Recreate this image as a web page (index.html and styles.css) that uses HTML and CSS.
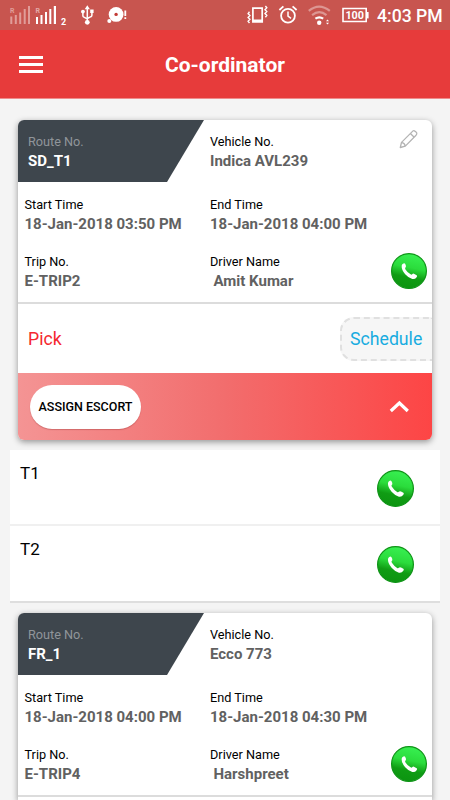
FILE: index.html
```html
<!DOCTYPE html>
<html lang="en">
<head>
<meta charset="utf-8">
<title>Co-ordinator</title>
<link rel="stylesheet" href="styles.css">
</head>
<body>
<svg class="defs" width="0" height="0" aria-hidden="true">
  <defs>
    <linearGradient id="green" x1="0.6" y1="0" x2="0.4" y2="1">
      <stop offset="0" stop-color="#38f052"/>
      <stop offset="0.4" stop-color="#2bdc3c"/>
      <stop offset="0.68" stop-color="#109c14"/>
      <stop offset="1" stop-color="#0c9410"/>
    </linearGradient>
    <symbol id="call" viewBox="0 0 36 36">
      <circle cx="18" cy="18" r="17.4" fill="url(#green)" stroke="#0f9417" stroke-width="1.2"/>
      <path fill="#fff" d="M10.7 12.7C10.8 11.5 12.2 10.3 13.3 10.2Q14.2 10.4 14.8 12.3Q15.3 14.2 14.3 14.7Q13.8 15.2 14.5 16.4Q16.5 19.6 19.6 21.3Q20.6 22 21.2 21.2Q22.1 20.1 23.4 20.9L25.7 22.2Q26.6 23 25.6 24.2Q24 26.6 21.3 26Q17.8 25.2 14.2 21.2Q10.3 16.6 10.7 12.7Z"/>
    </symbol>
  </defs>
</svg>

<div class="status">
  <svg class="status-icons" width="140" height="30" viewBox="0 0 140 30">
    <g fill="#e09d99">
      <path d="M10.3 16.5h2v7.5h-2zM14.8 15h2v9h-2zM19.2 12.5h2v11.5h-2zM23.7 9h2v15h-2zM28 6h2v18h-2z"/>
      <text class="roam" x="10" y="13">R</text>
    </g>
    <g fill="#fff">
      <path d="M36 17h2v7h-2zM40.5 15h2v9h-2zM45 12h2v12h-2zM49.3 9h2v15h-2zM53.8 6h2.2v18h-2.2z"/>
      <text class="roam" x="35.5" y="13" fill="#e3aaa7">R</text>
      <text class="sim" x="61" y="25.2">2</text>
    </g>
    <g fill="none" stroke="#fff" stroke-width="1.5">
      <path d="M87.3 8v14M82.9 12.5v3.2q0 1 1 1.4l3.4 1.8M91.9 12v3.3q0 1-1 1.4l-3.6 1.8"/>
    </g>
    <g fill="#fff">
      <path d="M87.3 5.2l2.6 4h-5.2zM90.2 9.6h3.4v3.4h-3.4z"/>
      <circle cx="82.9" cy="11.6" r="1.9"/>
      <circle cx="87.3" cy="22.3" r="2.4"/>
      <circle cx="116.1" cy="14.4" r="7.4"/>
      <circle cx="109.3" cy="21" r="2"/>
      <path d="M124.4 10.5h1.8v5.6h-1.8zM124.4 17.2h1.8v1.8h-1.8z"/>
    </g>
    <circle cx="116.1" cy="14.4" r="1.7" fill="#c33b36"/>
  </svg>
  <div class="status-right">
    <svg width="126" height="30" viewBox="244 0 126 30">
      <g fill="none" stroke="#fff" stroke-width="1.4">
        <path d="M252.9 8.2h9.3v13.6h-9.3z" stroke-width="1.7"/>
        <path d="M253 20.3h9" stroke-width="1.6"/>
        <path d="M249.5 11.8l-1.4 1.8 1.8 1.9-1.8 1.9 1.8 1.9-1.8 1.9 1.4 1.8M265.4 6l1.4 1.8-1.8 1.9 1.8 1.9-1.8 1.9 1.8 1.9-1.4 1.8"/>
        <circle cx="288" cy="15.8" r="6.9" stroke-width="1.8"/>
        <path d="M288 11.5v4.6l3 2.2" stroke-width="1.5"/>
        <path d="M279.4 10l4-3.6M296.6 10l-4-3.6" stroke-width="1.8"/>
        <path d="M308.8 10.8q10.3-8.5 21 0M312.1 15.1q7.2-5.8 14.4 0" stroke="#dd9692" stroke-width="2.2"/>
        <path d="M315.4 18.7q3.9-2.7 7.8 0" stroke-width="2.1"/>
        <path d="M343 8.5h23.2v13H343z" stroke-width="1.6"/>
      </g>
      <circle cx="319.2" cy="22.8" r="2.2" fill="#fff"/>
      <path d="M326 21.2l1.5-1.8 1.5 1.8zM326 22.8l1.5 1.8 1.5-1.8z" fill="#fff"/>
      <path d="M366.8 12h1.8v6.4h-1.8z" fill="#fff"/>
      <text class="battery" x="345.4" y="19" fill="#fff">100</text>
    </svg>
    <span class="clock">4:03 PM</span>
  </div>
</div>

<header class="appbar">
  <div class="menu"><i></i><i></i><i></i></div>
  <h1>Co-ordinator</h1>
</header>

<main>
  <section class="card">
    <div class="card-head">
      <div class="route"><div class="label">Route No.</div><div class="value">SD_T1</div></div>
      <div class="field"><div class="label">Vehicle No.</div><div class="value">Indica AVL239</div></div>
      <svg class="edit" width="20" height="20" viewBox="0 0 20 20" fill="none" stroke="#b3b3b3" stroke-width="1.3" stroke-linejoin="round">
        <path d="M1.3 18.5l1.2-5.1L13 2.9q1.1-1.6 2.4-1.1 1.5.7 2.4 2.2.3 1.2-1 2.5L6.3 17.1zM2.5 13.4q3 .4 3.8 3.7M11.4 4.5l3.8 3.7"/>
      </svg>
    </div>
    <div class="row times">
      <div class="field"><div class="label">Start Time</div><div class="value">18-Jan-2018 03:50 PM</div></div>
      <div class="field"><div class="label">End Time</div><div class="value">18-Jan-2018 04:00 PM</div></div>
    </div>
    <div class="row trip">
      <div class="field"><div class="label">Trip No.</div><div class="value">E-TRIP2</div></div>
      <div class="field"><div class="label">Driver Name</div><div class="value driver">Amit Kumar</div></div>
      <svg class="call" width="36" height="36"><use href="#call"/></svg>
    </div>
    <div class="pick-row">
      <span class="pick">Pick</span>
      <span class="schedule">Schedule</span>
    </div>
    <div class="escort">
      <button class="assign">ASSIGN ESCORT</button>
      <svg width="22" height="16" viewBox="0 0 22 16"><path d="M2.8 12L11.4 4l8.4 8" fill="none" stroke="#fff" stroke-width="3.2"/></svg>
    </div>
  </section>

  <ul class="people">
    <li><span>T1</span><svg width="37" height="37"><use href="#call"/></svg></li>
    <li><span>T2</span><svg width="37" height="37"><use href="#call"/></svg></li>
  </ul>

  <section class="card card-partial">
    <div class="card-head">
      <div class="route"><div class="label">Route No.</div><div class="value">FR_1</div></div>
      <div class="field"><div class="label">Vehicle No.</div><div class="value">Ecco 773</div></div>
    </div>
    <div class="row times">
      <div class="field"><div class="label">Start Time</div><div class="value">18-Jan-2018 04:00 PM</div></div>
      <div class="field"><div class="label">End Time</div><div class="value">18-Jan-2018 04:30 PM</div></div>
    </div>
    <div class="row trip">
      <div class="field"><div class="label">Trip No.</div><div class="value">E-TRIP4</div></div>
      <div class="field"><div class="label">Driver Name</div><div class="value driver">Harshpreet</div></div>
      <svg class="call" width="36" height="36"><use href="#call"/></svg>
    </div>
    <div class="card-cut"></div>
  </section>
</main>
</body>
</html>
```
FILE: styles.css
```css
* { box-sizing: border-box; }
html, body { height: 100%; }
body {
  margin: 0;
  width: 450px;
  height: 800px;
  overflow: hidden;
  background: #f4f4f4;
  font-family: Roboto, "Liberation Sans", sans-serif;
  color: #000;
}
svg { display: block; flex: none; }
.defs { position: absolute; }

.status {
  height: 30px;
  display: flex;
  justify-content: space-between;
  background: #c8554f;
  color: #fff;
}
.status-right { display: flex; }
.clock {
  width: 80px;
  padding-left: 7px;
  font-size: 17.6px;
  font-weight: 500;
  line-height: 32px;
  white-space: nowrap;
}
.roam { font-size: 7px; font-weight: 700; }
.sim { font-size: 9px; font-weight: 700; }
.battery { font-size: 10.8px; font-weight: 700; }

.appbar {
  height: 69px;
  display: grid;
  grid-template-columns: 50px 1fr 50px;
  align-items: center;
  background: #e73b3b;
  border-bottom: 1px solid #ee8c8c;
  color: #fff;
}
.menu { display: grid; gap: 4px; padding-left: 19.4px; }
.menu i { width: 23.5px; height: 3px; background: #fff; }
.appbar h1 {
  margin: 2px 0 0;
  font-size: 21px;
  font-weight: 700;
  text-align: center;
}

main { height: 701px; padding-top: 21px; overflow: hidden; }
.card {
  width: 414px;
  margin: 0 18px;
  border-radius: 6px;
  background: #fff;
  overflow: hidden;
  box-shadow: 0 2px 6px rgba(0, 0, 0, .4);
}
.card-partial { border-radius: 6px 6px 0 0; }
.card-head { display: flex; height: 62px; }
.route {
  width: 186px;
  padding: 12px 0 0 10px;
  background: #3e464d;
  clip-path: polygon(0 0, 100% 0, 149px 100%, 0 100%);
}
.route .label { color: #90959a; }
.route .value { color: #fff; }
.card-head .field { flex: 1; padding: 12px 0 0 6px; }
.edit { margin: 9px 13px 0 0; }
.label { font-size: 12.7px; line-height: 19px; }
.value { font-size: 15px; font-weight: 700; line-height: 21px; color: #616161; white-space: nowrap; }
.row {
  display: grid;
  grid-template-columns: 185.5px 181px 36px;
  padding-left: 6.5px;
  height: 57px;
}
.times { padding-top: 13px; }
.trip { height: 63px; padding-top: 13px; }
.trip .call { margin-top: 1px; }
.driver { padding-left: 3.5px; }
.pick-row {
  height: 71px;
  border-top: 2px solid #dcdcdc;
  display: flex;
  justify-content: space-between;
  align-items: center;
  padding-left: 10px;
  font-size: 17.7px;
}
.card-cut { height: 5px; border-top: 2px solid #dcdcdc; }
.pick { color: #f5282f; }
.schedule {
  width: 93px;
  height: 44px;
  margin-right: -1px;
  padding-left: 8px;
  border: 2px dashed #e0e0e0;
  border-right: 0;
  border-radius: 14px 0 0 14px;
  background: #f6f6f6;
  color: #18ace0;
  line-height: 41px;
}
.escort {
  height: 67px;
  display: flex;
  align-items: center;
  justify-content: space-between;
  padding: 0 22px 0 12px;
  background: linear-gradient(90deg, #f49494, #f26d6d 50%, #fd4545);
}
.assign {
  width: 111px;
  height: 44px;
  padding: 0;
  border: 0;
  border-radius: 22px;
  background: #fff;
  box-shadow: 0 1px 1px rgba(130, 30, 30, .3);
  color: #000;
  font: 500 12.5px Roboto, sans-serif;
}

.people { margin: 10px 10px; padding: 0; list-style: none; }
.people li {
  height: 76px;
  display: flex;
  justify-content: space-between;
  padding: 12px 26.5px 0 10px;
  background: #fff;
  border-bottom: 2px solid #f0f0f0;
  font-size: 17px;
  line-height: 23px;
}
.people li:last-child { height: 77px; border-bottom-color: #dedede; }
.people svg { margin-top: 8px; }
```
